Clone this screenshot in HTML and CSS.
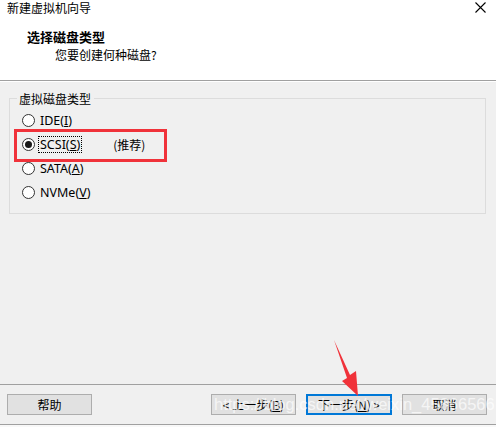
FILE: index.html
```html
<!DOCTYPE html>
<html>
<head>
<meta charset="utf-8">
<link rel="stylesheet" href="styles.css">
</head>
<body>
<div class="window">
  <div class="top">
    <div class="titlebar">
      <span class="wtitle">新建虚拟机向导</span>
      <svg class="close" width="11" height="11" viewBox="0 0 11 11"><path d="M0.5 0.5L10.5 10.5M10.5 0.5L0.5 10.5" stroke="#000" stroke-width="1.1" fill="none"/></svg>
    </div>
    <div class="header">
      <div class="htitle">选择磁盘类型</div>
      <div class="hsub">您要创建何种磁盘?</div>
    </div>
  </div>
  <div class="main">
    <div class="group">
      <div class="legend">虚拟磁盘类型</div>
      <div class="row"><span class="radio"></span><span class="lbl">IDE(<u>I</u>)</span></div>
      <div class="row"><span class="radio checked"></span><span class="lbl focus">SCSI(<u>S</u>)</span><span class="rec">(推荐)</span></div>
      <div class="row"><span class="radio"></span><span class="lbl">SATA(<u>A</u>)</span></div>
      <div class="row"><span class="radio"></span><span class="lbl">NVMe(<u>V</u>)</span></div>
    </div>
  </div>
  <div class="footer">
    <button class="btn">帮助</button>
    <div class="spacer"></div>
    <button class="btn">&lt; 上一步(<u>B</u>)</button>
    <button class="btn default">下一步(<u>N</u>) &gt;</button>
    <button class="btn">取消</button>
  </div>
  <div class="edge"></div>

  <div class="watermark">https://blog.csdn.net/weixin_45866566</div>
  <div class="redbox"></div>
  <svg class="arrow" width="496" height="427" viewBox="0 0 496 427">
    <polygon points="334,340 350,375 356,371 358,396 342,381 347,378" fill="#f0323a"/>
  </svg>
</div>
</body>
</html>
```
FILE: styles.css
```css
* { box-sizing: border-box; }
html, body { margin: 0; padding: 0; }
body {
  width: 496px;
  height: 427px;
  overflow: hidden;
  font-family: "Noto Sans", "Noto Sans CJK SC", sans-serif;
  font-size: 12px;
  color: #000;
  background: #f0f0f0;
}
.window {
  position: relative;
  width: 496px;
  height: 427px;
  display: flex;
  flex-direction: column;
}
.top {
  background: #fff;
  height: 81px;
  border-bottom: 1px solid #a0a0a0;
  box-shadow: 0 1px 0 #fff;
}
.titlebar {
  height: 24px;
  display: flex;
  align-items: flex-start;
  justify-content: space-between;
  padding: 0 10px 0 7px;
}
.wtitle {
  font-family: "Noto Sans CJK SC", sans-serif;
  font-size: 12px;
  line-height: 16px;
}
.close { margin-top: 2px; }
.header {
  padding-left: 27px;
  padding-top: 5px;
}
.htitle {
  font-family: "Noto Sans CJK SC", sans-serif;
  font-weight: bold;
  font-size: 13px;
  line-height: 16px;
}
.hsub {
  font-family: "Noto Sans CJK SC", sans-serif;
  padding-left: 28px;
  font-size: 12px;
  line-height: 16px;
  margin-top: 2px;
}
.main {
  flex: 1;
  padding: 17px 0 0 9px;
}
.group {
  width: 477px;
  height: 116px;
  border: 1px solid #dcdcdc;
  padding: 0 0 0 12px;
  display: flex;
  flex-direction: column;
  align-items: flex-start;
}
.legend {
  margin-top: -8px;
  margin-left: -5px;
  padding: 0 3px 0 2px;
  background: #f0f0f0;
  font-family: "Noto Sans CJK SC", sans-serif;
  line-height: 16px;
}
.row {
  height: 24px;
  display: flex;
  align-items: center;
}
.legend + .row { margin-top: 1px; }
.radio {
  width: 13px;
  height: 13px;
  border: 1px solid #333;
  border-radius: 50%;
  background: #fff;
  margin-right: 3px;
  flex: none;
  display: flex;
  align-items: center;
  justify-content: center;
}
.radio.checked::after {
  content: "";
  width: 7px;
  height: 7px;
  border-radius: 50%;
  background: #1a1a1a;
}
.lbl {
  border: 1px dotted transparent;
  padding: 0 1px;
  line-height: 15px;
  font-size: 12.5px;
}
.lbl.focus { border-color: #000; }
.lbl u, .btn u { text-decoration-thickness: 1px; text-underline-offset: 1px; }
.rec {
  margin-left: 31px;
  font-family: "Noto Sans CJK SC", sans-serif;
}
.footer {
  height: 40px;
  border-top: 1px solid #a0a0a0;
  display: flex;
  align-items: flex-start;
  padding: 9px 9px 0 7px;
  gap: 10px;
}
.spacer { flex: 1; }
.btn {
  width: 85px;
  height: 21px;
  border: 1px solid #adadad;
  background: #e1e1e1;
  font-family: "Noto Sans CJK SC", "Noto Sans", sans-serif;
  font-size: 12px;
  line-height: 17px;
  padding: 0;
  color: #000;
}
.btn.default {
  border: 2px solid #0078d7;
  width: 86px;
}
.edge {
  height: 3px;
  border-top: 1px solid #a0a0a0;
  background: #f8f8f8;
}
.watermark {
  position: absolute;
  left: 214px;
  top: 395px;
  font-family: "Liberation Sans", sans-serif;
  font-size: 16.5px;
  color: rgba(255, 255, 255, 0.7);
  white-space: nowrap;
  pointer-events: none;
}
.redbox {
  position: absolute;
  left: 14px;
  top: 129px;
  width: 153px;
  height: 33px;
  border: 3px solid #f0323a;
}
.arrow {
  position: absolute;
  left: 0;
  top: 0;
  pointer-events: none;
}
```
